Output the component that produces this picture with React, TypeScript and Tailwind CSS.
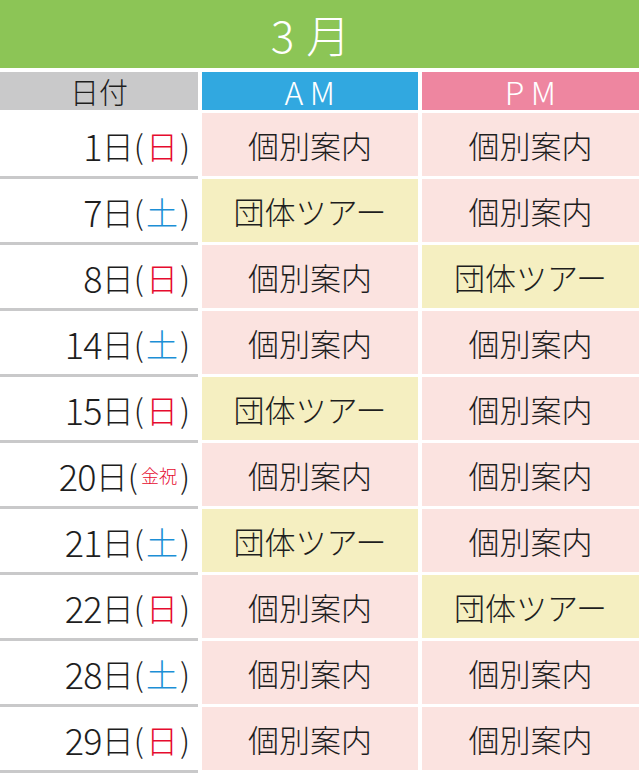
const rows = [
  { day: "1", wd: "日", am: "個別案内", pm: "個別案内" },
  { day: "7", wd: "土", am: "団体ツアー", pm: "個別案内" },
  { day: "8", wd: "日", am: "個別案内", pm: "団体ツアー" },
  { day: "14", wd: "土", am: "個別案内", pm: "個別案内" },
  { day: "15", wd: "日", am: "団体ツアー", pm: "個別案内" },
  { day: "20", wd: "金祝", am: "個別案内", pm: "個別案内" },
  { day: "21", wd: "土", am: "団体ツアー", pm: "個別案内" },
  { day: "22", wd: "日", am: "個別案内", pm: "団体ツアー" },
  { day: "28", wd: "土", am: "個別案内", pm: "個別案内" },
  { day: "29", wd: "日", am: "個別案内", pm: "個別案内" },
];

function Slot({ text }: { text: string }) {
  const tour = text === "団体ツアー";
  return (
    <div
      className={
        "h-[63px] flex items-center justify-center text-[31px] leading-[44px] font-light text-[#1e1e1e] " +
        (tour ? "bg-[#f5efc1]" : "bg-[#fbe3e0]")
      }
    >
      {text}
    </div>
  );
}

function Weekday({ wd }: { wd: string }) {
  if (wd === "金祝") {
    return <span className="text-[18px] text-[#e60b2f] mx-[3px]">金祝</span>;
  }
  return (
    <span className={"mx-[2px] " + (wd === "土" ? "text-[#1c8fd6]" : "text-[#e60b2f]")}>
      {wd}
    </span>
  );
}

export default function App() {
  return (
    <div
      className="w-[639px] h-[774px] bg-white overflow-hidden"
      style={{ fontFamily: '"Noto Sans CJK JP", "Noto Sans", sans-serif' }}
    >
      <div className="h-[68px] bg-[#8cc556] flex items-center justify-center pr-[18px] text-white text-[44px] leading-[60px] font-light">
        <span>3</span>
        <span className="ml-[12px]">月</span>
      </div>
      <div className="grid grid-cols-[198px_216px_217px] grid-rows-[38px] gap-x-[4px] mt-[4px]">
        <div className="bg-[#c9c9ca] flex items-center justify-center text-[29px] leading-[38px] font-light text-[#1e1e1e]">
          日付
        </div>
        <div className="bg-[#31a8e0] flex items-center justify-center text-[32px] leading-[38px] font-light text-white tracking-[0.2em] pl-[6px]">
          AM
        </div>
        <div className="bg-[#ee86a0] flex items-center justify-center text-[32px] leading-[38px] font-light text-white tracking-[0.2em] pl-[6px]">
          PM
        </div>
      </div>
      <div className="mt-[3px] flex flex-col">
        {rows.map((r) => (
          <div
            key={r.day}
            className="grid grid-cols-[198px_216px_217px] gap-x-[4px] items-start h-[66px]"
          >
            <div className="h-[66px] border-b-[3px] border-[#c9c9ca] flex items-center justify-end pr-[8px] text-[32px] leading-[44px] font-light text-[#1e1e1e]">
              <span className="text-[36px] tracking-[-0.02em]">{r.day}</span>
              <span>日(</span>
              <Weekday wd={r.wd} />
              <span>)</span>
            </div>
            <Slot text={r.am} />
            <Slot text={r.pm} />
          </div>
        ))}
      </div>
    </div>
  );
}
